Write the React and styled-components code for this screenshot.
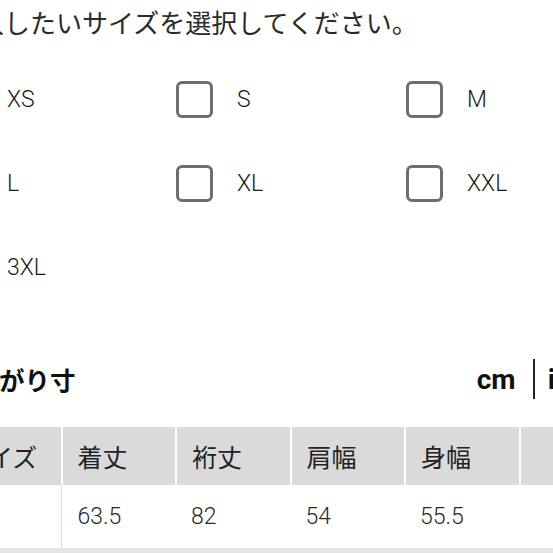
import React from "react"
import styled, { createGlobalStyle } from "styled-components"

const GlobalStyle = createGlobalStyle`
  html, body {
    margin: 0;
    padding: 0;
    background: #fff;
  }
  body {
    font-family: Roboto, "Noto Sans CJK JP", sans-serif;
    color: #222;
  }
`

const Page = styled.div`
  width: 553px;
  height: 553px;
  overflow: hidden;
`

// the screenshot is cropped on the left, so the content starts off-screen
const Content = styled.div`
  margin-left: -54px;
  width: 674px;
  display: flex;
  flex-direction: column;
`

const Title = styled.div`
  margin-top: 4px;
  padding-left: 6px;
  font-family: "Noto Sans CJK JP", sans-serif;
  font-size: 26px;
  line-height: 36px;
  white-space: nowrap;
  color: #2a2a2a;
`

const SizeGrid = styled.div`
  margin-top: 17px;
  display: grid;
  grid-template-columns: repeat(3, 230px);
  grid-auto-rows: 84px;
`

const SizeOption = styled.label`
  display: flex;
  align-items: center;
  gap: 24px;
`

const Checkbox = styled.span`
  box-sizing: border-box;
  width: 37px;
  height: 37px;
  border: 3px solid #6e6e6e;
  border-radius: 6px;
  background: #fff;
`

const SizeLabel = styled.span`
  font-family: Roboto, sans-serif;
  font-size: 23px;
  font-weight: 300;
  color: #1a1a1a;
`

const HeadingRow = styled.div`
  margin-top: 50px;
  height: 40px;
  display: flex;
  align-items: center;
  justify-content: space-between;
  padding-left: 2px;
  padding-right: 19px;
`

const Heading = styled.h2`
  margin: 0;
  font-family: "Noto Sans CJK JP", sans-serif;
  font-size: 25.5px;
  font-weight: 700;
  line-height: 36px;
  white-space: nowrap;
  color: #111;
`

const Units = styled.div`
  display: flex;
  align-items: center;
  height: 40px;
`

const Unit = styled.span`
  font-family: Roboto, sans-serif;
  font-size: 28px;
  font-weight: 700;
  color: #111;
`

const UnitDivider = styled.span`
  width: 2px;
  height: 40px;
  background: #222;
  margin: 0 13px 0 17px;
`

const Table = styled.div`
  margin-top: 28px;
  display: grid;
  grid-template-columns: repeat(7, 114.5px);
`

const HeadCell = styled.div`
  box-sizing: border-box;
  height: 58px;
  display: flex;
  align-items: center;
  padding-left: ${({ $first }) => ($first ? "17px" : "15px")};
  background: #dadada;
  border-left: ${({ $first }) => ($first ? "none" : "2px solid #fff")};
  font-family: "Noto Sans CJK JP", sans-serif;
  font-size: 25px;
  color: #222;
  white-space: nowrap;
`

const Cell = styled.div`
  box-sizing: border-box;
  height: 63px;
  display: flex;
  align-items: center;
  padding-left: 16px;
  border-left: ${({ $afterFirst }) => ($afterFirst ? "1px solid #dcdcdc" : "none")};
  font-family: Roboto, sans-serif;
  font-size: 23px;
  font-weight: 300;
  color: #2a2a2a;
`

const NextRow = styled.div`
  grid-column: 1 / -1;
  height: 20px;
  background: #e4e4e4;
`

const sizes = ["XS", "S", "M", "L", "XL", "XXL", "3XL"]
const columns = ["サイズ", "着丈", "裄丈", "肩幅", "身幅", "", ""]
const values = ["", "63.5", "82", "54", "55.5", "", ""]

export default function App() {
  return (
    <Page>
      <GlobalStyle />
      <Content>
        <Title>購入したいサイズを選択してください。</Title>

        <SizeGrid>
          {sizes.map(size => (
            <SizeOption key={size}>
              <Checkbox />
              <SizeLabel>{size}</SizeLabel>
            </SizeOption>
          ))}
        </SizeGrid>

        <HeadingRow>
          <Heading>仕上がり寸</Heading>
          <Units>
            <Unit>cm</Unit>
            <UnitDivider />
            <Unit>inch</Unit>
          </Units>
        </HeadingRow>

        <Table>
          {columns.map((c, i) => (
            <HeadCell key={"h" + i} $first={i === 0}>
              {c}
            </HeadCell>
          ))}
          {values.map((v, i) => (
            <Cell key={"v" + i} $afterFirst={i === 1}>
              {v}
            </Cell>
          ))}
          <NextRow />
        </Table>
      </Content>
    </Page>
  )
}
